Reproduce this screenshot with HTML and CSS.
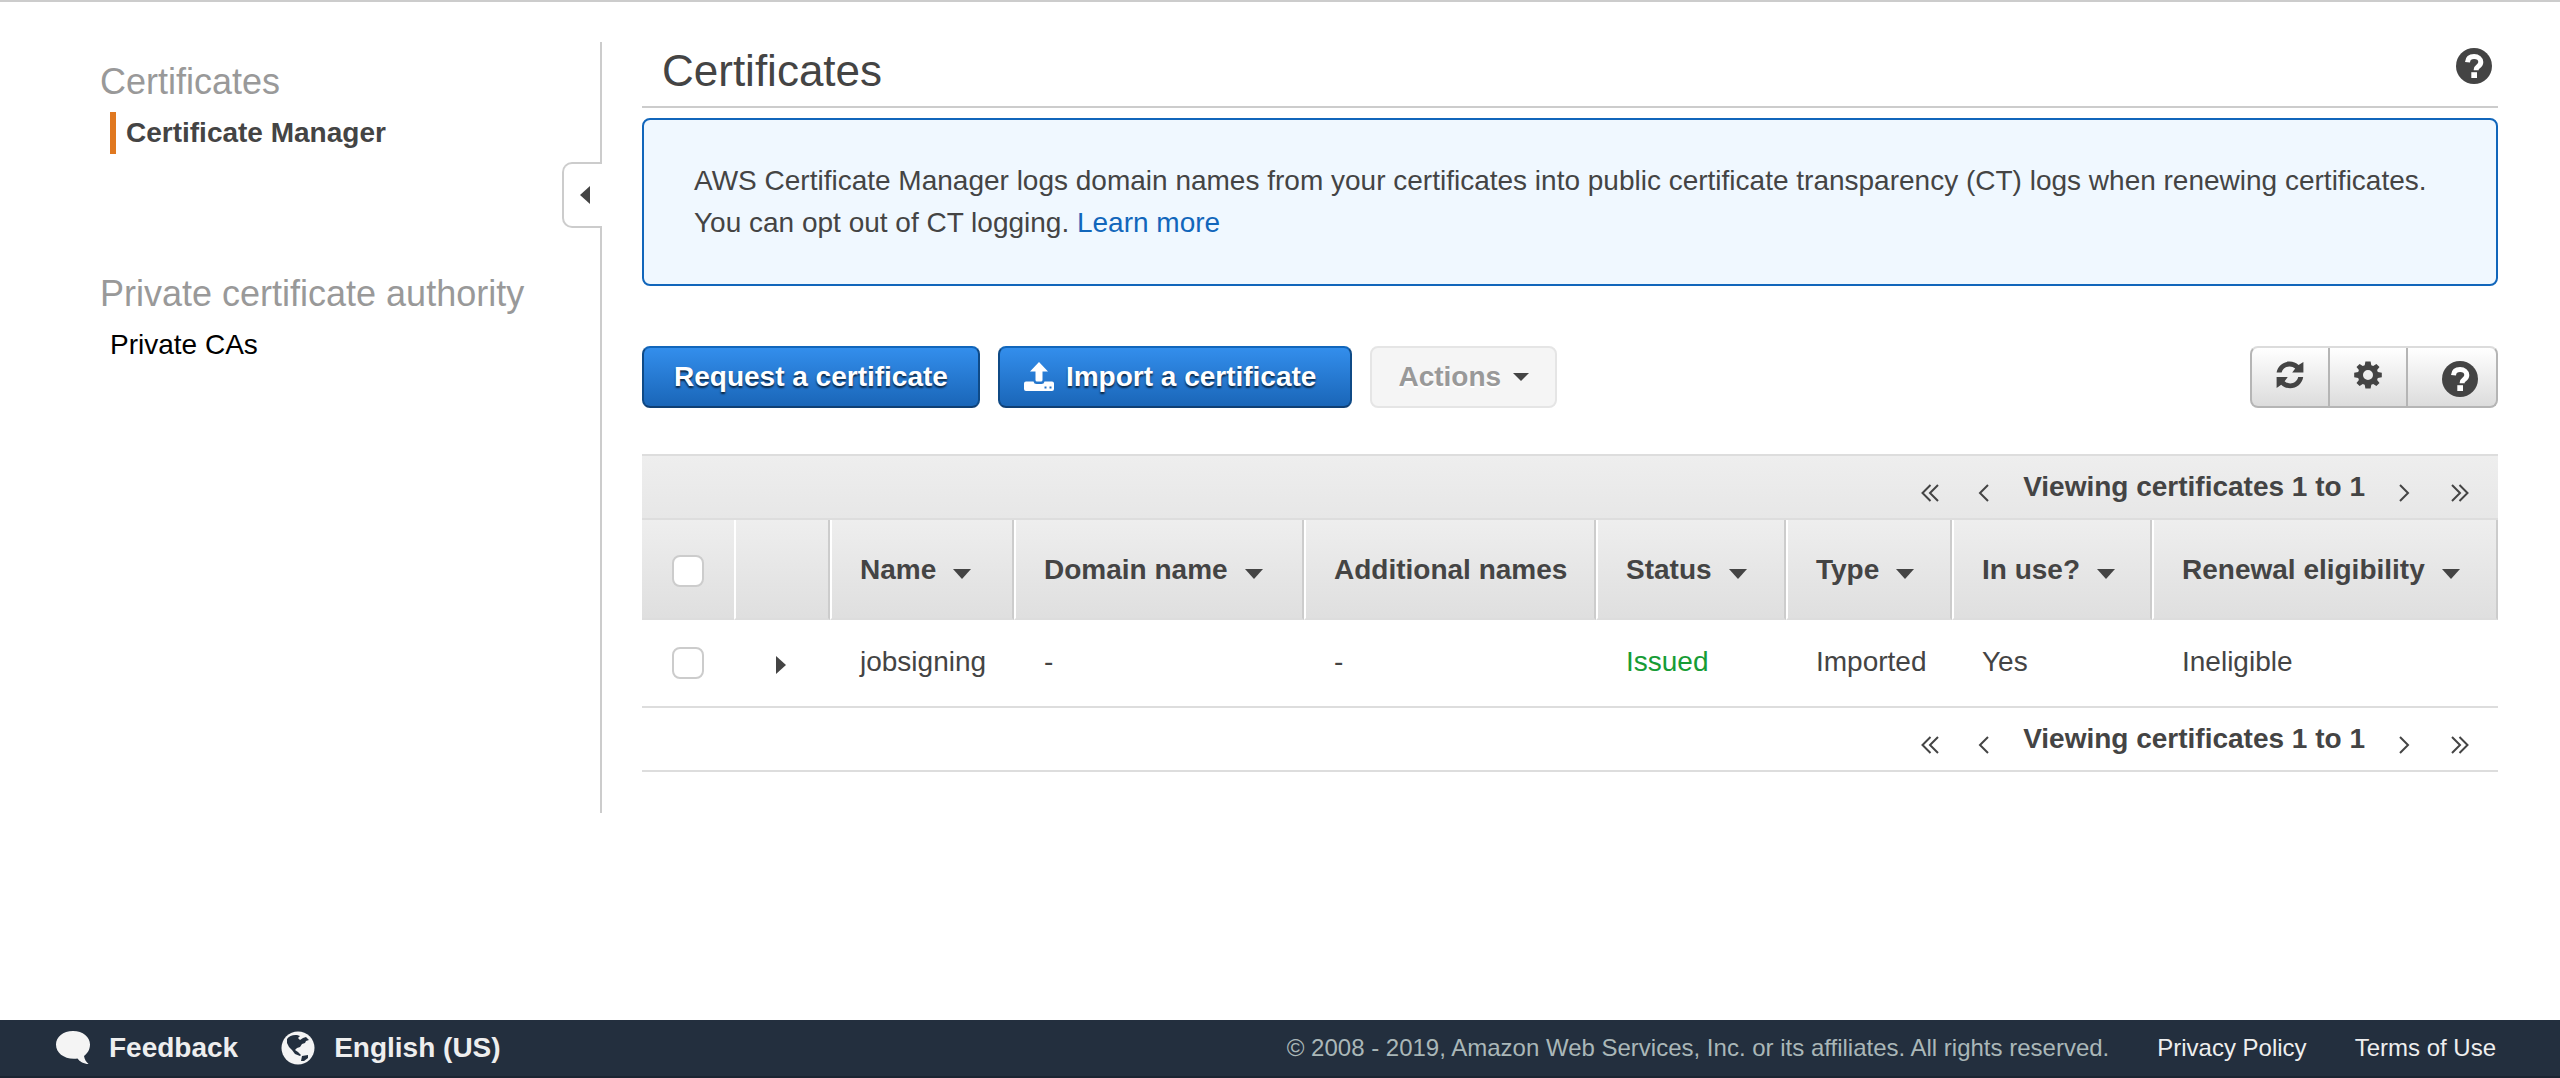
FILE: index.html
```html
<!DOCTYPE html>
<html lang="en">
<head>
<meta charset="utf-8">
<title>Certificate Manager</title>
<link rel="stylesheet" href="styles.css">
</head>
<body>
<svg class="sprite" aria-hidden="true">
  <symbol id="help" viewBox="0 0 36 36">
    <circle cx="18" cy="18" r="18"/>
    <path d="M11.5 14.2C11.8 10.6 14.3 8.6 18.1 8.6C22 8.6 24.8 10.8 24.8 14.1C24.8 16.4 23.6 17.6 21.9 18.8C20.6 19.7 20.2 20.2 20.2 21.6V22.2" fill="none" stroke="#fff" stroke-width="5"/>
    <path d="M15.3 24.2H21V30H15.3Z" fill="#fff"/>
  </symbol>
  <symbol id="refresh" viewBox="0 0 28 28">
    <path d="M0.6 11.6C1.6 5 7.2 0.6 13.6 0.6C17.2 0.6 20.2 1.9 22.6 4.1L27.4 1V11.6H16.2L19.2 7.6C17.6 6.1 15.8 5.4 13.6 5.4C9.8 5.4 6.6 7.8 5.6 11.6Z"/>
    <path d="M27.2 16C26.2 22.8 20.6 27.2 14.2 27.2C10.6 27.2 7.6 25.9 5.2 23.7L0.6 27V16H11.8L8.6 20.2C10.2 21.7 12 22.4 14.2 22.4C18 22.4 21.2 20 22.2 16Z"/>
  </symbol>
  <symbol id="gear" viewBox="0 0 28 28">
    <path fill-rule="evenodd" d="M11.4 0.5H16.6L17.3 4.3L19.2 5.1L22.4 2.9L25.5 6L23.1 9.1L23.8 11.1L27.8 11.7V16.3L23.8 16.9L23.1 18.9L25.5 22.1L22.4 25.1L19.2 22.9L17.3 23.7L16.6 27.5H11.4L10.7 23.7L8.8 22.9L5.6 25.1L2.5 22L4.9 18.9L4.2 16.9L0.2 16.3V11.7L4.2 11.1L4.9 9.1L2.5 6L5.6 2.9L8.8 5.1L10.7 4.3ZM14 9A5 5 0 1 0 14 19A5 5 0 1 0 14 9Z"/>
  </symbol>
  <symbol id="first" viewBox="0 0 18 18"><path d="M9.500 1L1.500 9L9.500 17M17 1L9 9L17 17"/></symbol>
  <symbol id="prev" viewBox="0 0 18 18"><path d="M13 1L5 9L13 17"/></symbol>
  <symbol id="next" viewBox="0 0 18 18"><path d="M5 1L13 9L5 17"/></symbol>
  <symbol id="last" viewBox="0 0 18 18"><path d="M1 1L9 9L1 17M8.500 1L16.500 9L8.500 17"/></symbol>
</svg>

<div class="page">
  <nav class="sidebar" aria-label="Service navigation">
    <section class="nav-group">
      <h2>Certificates</h2>
      <a class="nav-link current" href="#" aria-current="page">Certificate Manager</a>
    </section>
    <section class="nav-group">
      <h2>Private certificate authority</h2>
      <a class="nav-link" href="#">Private CAs</a>
    </section>
    <button class="collapse" type="button" aria-label="Collapse navigation">
      <svg width="10" height="18" viewBox="0 0 10 18"><path d="M0 9L10 0V18Z"/></svg>
    </button>
  </nav>

  <main class="main">
    <header class="title-bar">
      <h1>Certificates</h1>
      <button class="help" type="button" aria-label="Help"><svg width="36" height="36"><use href="#help"/></svg></button>
    </header>

    <div class="notice">
      <p>AWS Certificate Manager logs domain names from your certificates into public certificate transparency (CT) logs when renewing certificates.</p>
      <p>You can opt out of CT logging. <a href="#">Learn more</a></p>
    </div>

    <div class="toolbar">
      <button class="btn primary" type="button">Request a certificate</button>
      <button class="btn primary with-icon" type="button">
        <svg width="30" height="30" viewBox="0 0 30 30"><path fill-rule="evenodd" d="M15 0L24 9.500H18.500V18Q18.500 19.500 17 19.500H13Q11.500 19.500 11.500 18V9.500H6ZM2 19.500H9.500Q10 22 12.500 22H17.500Q20 22 20.500 19.500H28Q30 19.500 30 21.500V27Q30 29 28 29H2Q0 29 0 27V21.500Q0 19.500 2 19.500ZM20.500 24.500V26.500H22.500V24.500ZM25.500 24.500V26.500H27.500V24.500Z"/></svg>
        Import a certificate
      </button>
      <button class="btn actions" type="button" disabled>Actions
        <svg width="16" height="8" viewBox="0 0 16 8"><path d="M0 0H16L8 8Z"/></svg>
      </button>
      <div class="tool-group">
        <button type="button" aria-label="Refresh"><svg width="28" height="28"><use href="#refresh"/></svg></button>
        <button type="button" aria-label="Settings"><svg width="28" height="28"><use href="#gear"/></svg></button>
        <button class="wide" type="button" aria-label="Help"><svg width="36" height="36"><use href="#help"/></svg></button>
      </div>
    </div>

    <div class="pager top">
      <button type="button" aria-label="First page"><svg><use href="#first"/></svg></button>
      <button type="button" aria-label="Previous page"><svg><use href="#prev"/></svg></button>
      <span>Viewing certificates 1 to 1</span>
      <button type="button" aria-label="Next page"><svg><use href="#next"/></svg></button>
      <button type="button" aria-label="Last page"><svg><use href="#last"/></svg></button>
    </div>
    <table class="grid">
      <colgroup>
        <col class="c-check"><col class="c-expand"><col class="c-name"><col class="c-domain"><col class="c-extra"><col class="c-status"><col class="c-type"><col class="c-use"><col>
      </colgroup>
      <thead>
        <tr>
          <th class="check"><input type="checkbox" aria-label="Select all certificates"></th>
          <th class="expand"></th>
          <th scope="col">Name<i class="sort"></i></th>
          <th scope="col">Domain name<i class="sort"></i></th>
          <th scope="col">Additional names</th>
          <th scope="col">Status<i class="sort"></i></th>
          <th scope="col">Type<i class="sort"></i></th>
          <th scope="col">In use?<i class="sort"></i></th>
          <th scope="col">Renewal eligibility<i class="sort"></i></th>
        </tr>
      </thead>
      <tbody>
        <tr>
          <td class="check"><input type="checkbox" aria-label="Select jobsigning"></td>
          <td class="expand"><button type="button" aria-label="Expand jobsigning"><svg width="10" height="18" viewBox="0 0 10 18"><path d="M0 0L10 9L0 18Z"/></svg></button></td>
          <td>jobsigning</td>
          <td>-</td>
          <td>-</td>
          <td class="issued">Issued</td>
          <td>Imported</td>
          <td>Yes</td>
          <td>Ineligible</td>
        </tr>
      </tbody>
    </table>
    <div class="pager">
      <button type="button" aria-label="First page"><svg><use href="#first"/></svg></button>
      <button type="button" aria-label="Previous page"><svg><use href="#prev"/></svg></button>
      <span>Viewing certificates 1 to 1</span>
      <button type="button" aria-label="Next page"><svg><use href="#next"/></svg></button>
      <button type="button" aria-label="Last page"><svg><use href="#last"/></svg></button>
    </div>
  </main>
</div>

<footer class="footer">
  <a class="strong" href="#">
    <svg width="34" height="34" viewBox="0 0 34 34"><path d="M17 0C27 0 34 6 34 13.500C34 18.500 31.500 22.500 28 25C28.500 28 30 31 32.500 33C28 33 23.500 30.500 21.500 27.500C9 29 0 22.500 0 13.500C0 6 7 0 17 0Z"/></svg>
    Feedback</a>
  <a class="strong" href="#">
    <svg width="34" height="34" viewBox="0 0 34 34"><circle cx="17" cy="17" r="16.500"/><path fill="#232f3e" d="M6 8C8 5 12 3.500 16 4L19 5L17 7L19 9L22 7L25 6L28 9L25 10L24 12L21 13L19 16L16 17L14 19L17 21L20 24L19 25L14 23L11 19L8 16L6 12ZM21 25L27 24L27 27L23 30L20 30Z"/></svg>
    English (US)</a>
  <span class="copyright">© 2008 - 2019, Amazon Web Services, Inc. or its affiliates. All rights reserved.</span>
  <a href="#">Privacy Policy</a>
  <a href="#">Terms of Use</a>
</footer>
</body>
</html>
```
FILE: styles.css
```css
* {
  box-sizing: border-box;
}

body {
  margin: 0;
  min-height: 100vh;
  display: flex;
  flex-direction: column;
  border-top: 2px solid #ccc;
  background: #fff;
  color: #444;
  font: 28px/42px "Liberation Sans", Arial, sans-serif;
}

button {
  margin: 0;
  padding: 0;
  border: 0;
  background: none;
  color: inherit;
  font: inherit;
}

svg {
  display: block;
  flex: none;
  fill: #444;
}

a {
  color: #1166bb;
  text-decoration: none;
}

.sprite {
  position: absolute;
  width: 0;
  height: 0;
}

.page {
  flex: 1;
  display: flex;
  align-items: flex-start;
  gap: 40px;
  padding: 40px 62px 40px 0;
}

/* Navigation */

.sidebar {
  position: relative;
  flex: none;
  align-self: stretch;
  width: 602px;
  max-height: 771px;
  padding: 18px 20px 0 100px;
  border-right: 2px solid #ccc;
}

.nav-group {
  height: 212px;
}

.nav-group h2 {
  margin: 0 0 8px;
  color: #999;
  font-size: 36px;
  font-weight: normal;
  line-height: 44px;
}

.nav-link {
  display: block;
  margin-left: 10px;
  color: #000;
}

.nav-link.current {
  padding-left: 10px;
  border-left: 6px solid #e07820;
  color: #444;
  font-weight: bold;
}

.collapse {
  position: absolute;
  top: 120px;
  right: -2px;
  width: 40px;
  height: 66px;
  padding-left: 16px;
  border: 2px solid #ccc;
  border-right: 0;
  border-radius: 10px 0 0 10px;
  background: #fff;
}

/* Content */

.main {
  flex: 1;
  min-width: 0;
}

.title-bar {
  display: flex;
  justify-content: space-between;
  align-items: flex-start;
  padding: 4px 6px 10px 20px;
  border-bottom: 2px solid #ccc;
}

.title-bar h1 {
  margin: 0;
  font-size: 44px;
  font-weight: normal;
  line-height: 50px;
}

.help {
  padding-top: 2px;
}

.notice {
  margin: 10px 0 60px;
  padding: 40px 30px 40px 50px;
  border: 2px solid #1166bb;
  border-radius: 8px;
  background: #f0f8ff;
}

.notice p {
  margin: 0;
}

.toolbar {
  display: flex;
  gap: 18px;
  margin-bottom: 46px;
}

.btn {
  display: flex;
  align-items: center;
  height: 62px;
  padding: 0 26px;
  border: 2px solid #e5e5e5;
  border-radius: 8px;
  font-weight: bold;
  white-space: nowrap;
}

.primary {
  padding: 0 30px;
  border-color: #1166bb #0f4a86 #0f3f74;
  background: linear-gradient(#338eec, #1a66b8);
  color: #fff;
  text-shadow: 0 2px 2px rgba(0, 0, 0, 0.7);
}

.primary svg {
  fill: #fff;
}

.with-icon {
  gap: 12px;
  padding: 0 34px 0 24px;
}

.actions {
  gap: 12px;
  background: #f5f5f5;
  color: #999;
  text-shadow: 0 2px 0 #fff;
}

.tool-group {
  display: flex;
  height: 62px;
  margin-left: auto;
  border: 2px solid #b5b5b5;
  border-top-color: #dcdcdc;
  border-radius: 8px;
  background: linear-gradient(#fff, #dcdcdc);
}

.tool-group button {
  width: 78px;
  padding: 0 0 4px 24px;
  border-right: 2px solid #b5b5b5;
}

.tool-group .wide {
  width: 88px;
  padding: 4px 0 0 34px;
  border-right: 0;
}

/* Certificate list */

.pager {
  display: flex;
  justify-content: flex-end;
  align-items: center;
  height: 64px;
  padding-right: 29px;
  border-bottom: 2px solid #ddd;
  font-weight: bold;
}

.pager.top {
  height: 66px;
  border-top: 2px solid #ddd;
  background: linear-gradient(#eee, #e7e7e7);
}

.pager span {
  margin: 0 30px;
}

.pager button {
  padding-top: 11px;
}

.pager button:first-child {
  margin-right: 36px;
}

.pager button:last-child {
  margin-left: 38px;
}

.pager svg {
  width: 18px;
  height: 18px;
  fill: none;
  stroke: #444;
  stroke-width: 2;
}

.grid {
  width: 100%;
  table-layout: fixed;
  border-spacing: 0;
  text-align: left;
}

.c-check { width: 92px; }
.c-expand { width: 96px; }
.c-name { width: 184px; }
.c-domain { width: 290px; }
.c-extra { width: 292px; }
.c-status { width: 190px; }
.c-type { width: 166px; }
.c-use { width: 200px; }

.grid th {
  height: 100px;
  padding: 2px 0 0 28px;
  border: 2px solid #ccc;
  border-top: 0;
  border-left-color: #fff;
  border-bottom-color: #ddd;
  background: linear-gradient(#eee, #dfdfdf);
  white-space: nowrap;
}

.grid td {
  height: 88px;
  padding: 0 0 2px 30px;
  border-bottom: 2px solid #ddd;
}

.grid th.check {
  border-left: 0;
  border-right: 0;
  padding: 4px 0 0 30px;
}

.grid td.check {
  padding-top: 2px;
}

.grid td.expand {
  padding: 4px 0 0 42px;
}

.grid input {
  appearance: none;
  display: block;
  width: 32px;
  height: 32px;
  margin: 0;
  border: 2px solid #ccc;
  border-radius: 8px;
  background: #fff;
}

.sort {
  display: inline-block;
  margin-left: 17px;
  border: 9px solid transparent;
  border-top: 10px solid #444;
  border-bottom: 0;
}

.grid .issued {
  color: #169c35;
}

/* Footer */

.footer {
  display: flex;
  align-items: center;
  gap: 48px;
  height: 58px;
  padding: 0 64px 0 56px;
  border-bottom: 2px solid #1b2532;
  background: #232f3e;
  font-size: 24px;
}

.footer a {
  color: #eee;
}

.footer .strong {
  display: flex;
  align-items: center;
  gap: 19px;
  font-size: 28px;
  font-weight: bold;
}

.footer .strong + .strong {
  margin-left: -5px;
}

.footer svg {
  fill: #f4f4f4;
}

.copyright {
  margin-left: auto;
  color: #aab7b8;
}
```
